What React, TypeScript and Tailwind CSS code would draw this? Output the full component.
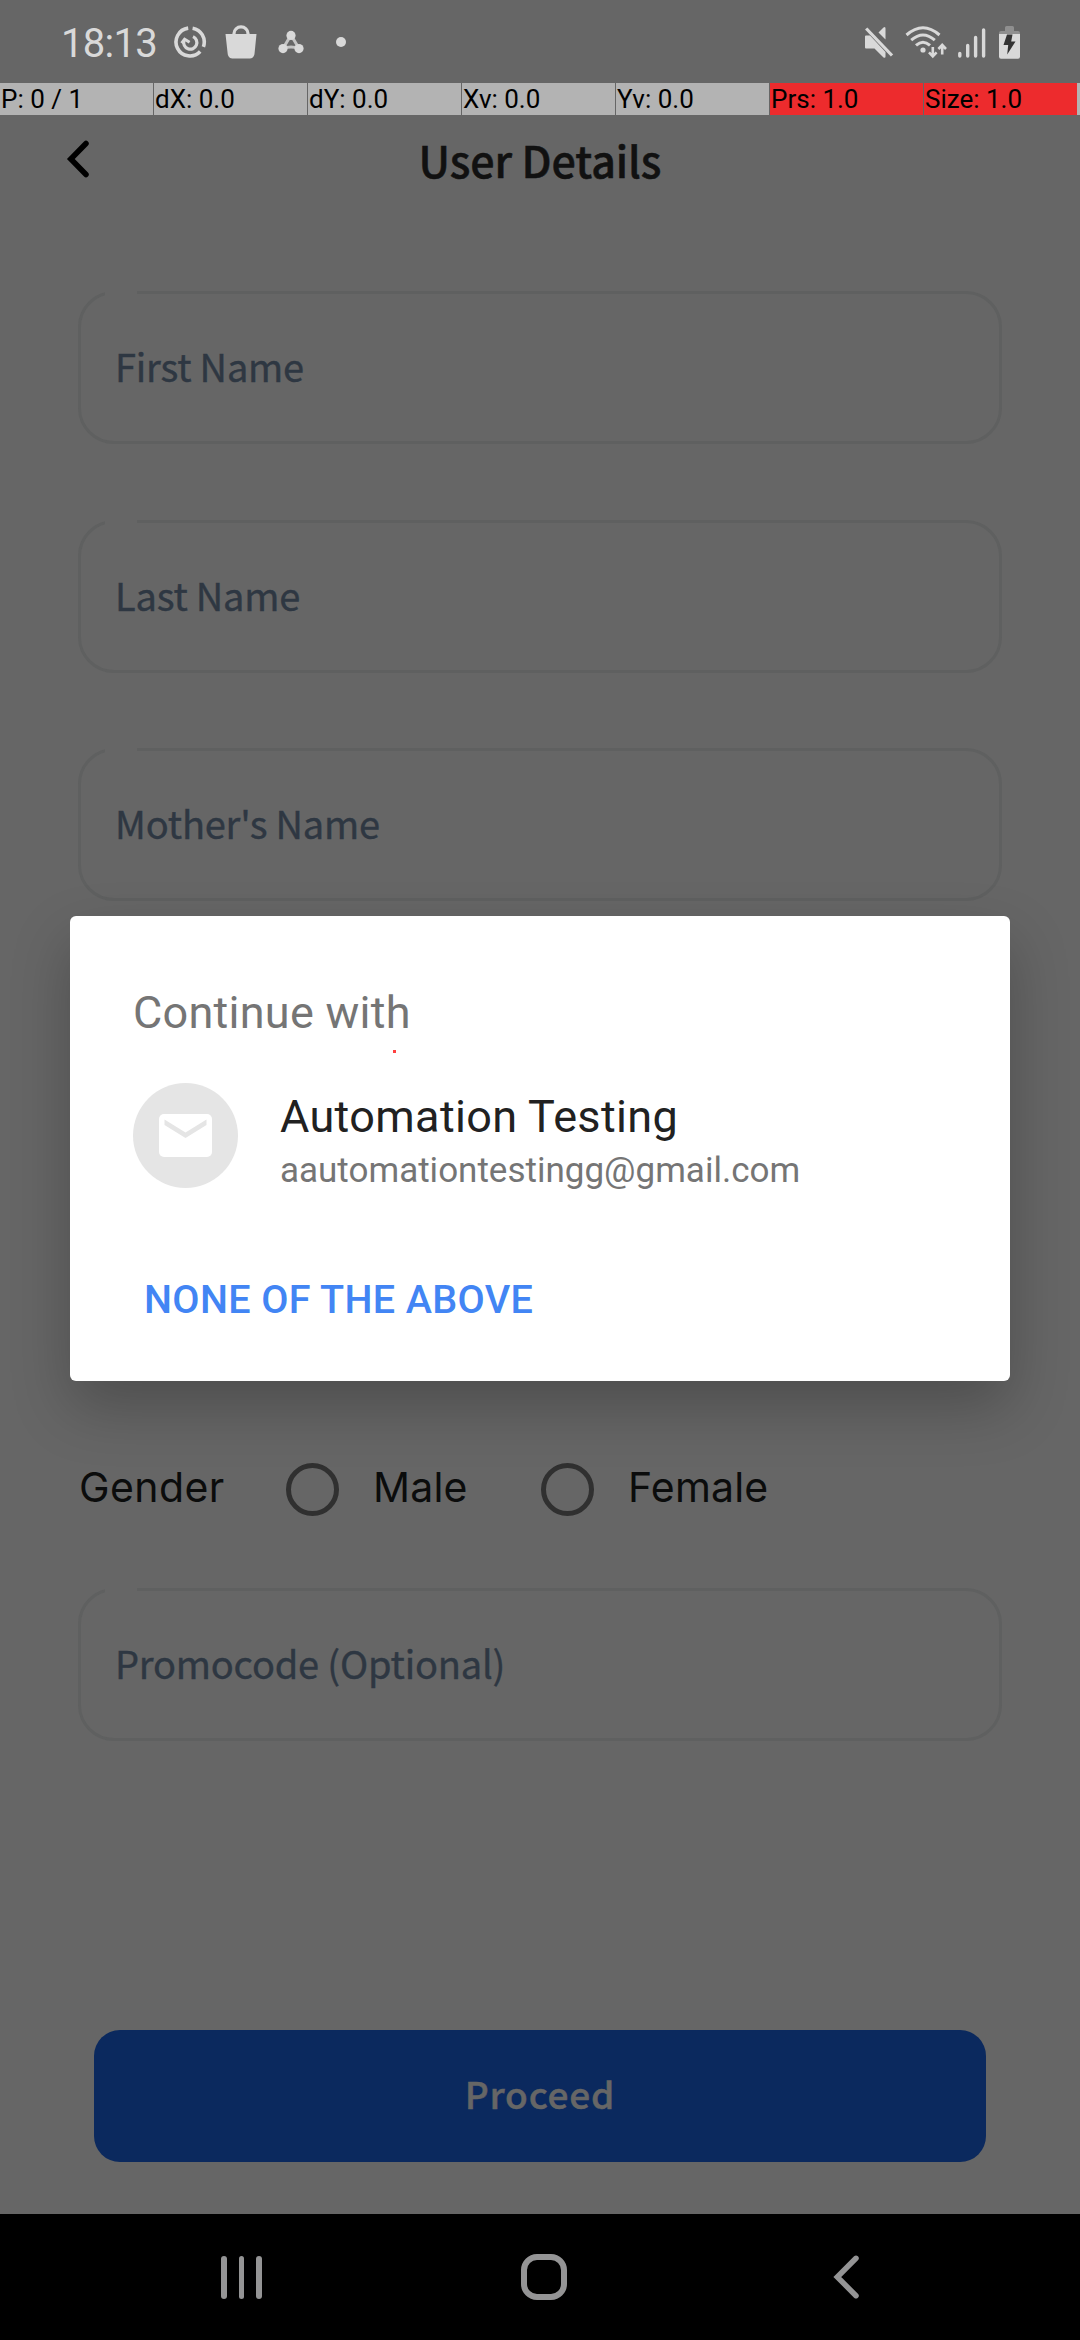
import React from 'react';

const cjk = "font-['Noto_Sans_CJK_SC','Noto_Sans',sans-serif]";

function SyncIcon() {
  return (
    <svg className="ml-[17px] h-[34px] w-[34px] shrink-0" viewBox="0 0 34 34" fill="none" stroke="#d9d9d9">
      <path d="M15.2 3.1A14 14 0 1 0 27.2 26.6" strokeWidth="3.6" />
      <path d="M19.6 3.2A14 14 0 0 1 30.4 21.8" strokeWidth="3.6" />
      <path d="M11 15.5A6.6 6.6 0 1 0 20 11.6" strokeWidth="3.2" />
      <path d="M8.6 18.2L11.6 14.2L16.6 17.2" strokeWidth="3" />
    </svg>
  );
}

function BagIcon() {
  return (
    <svg className="ml-[18px] h-[34px] w-[32px] shrink-0" viewBox="0 0 32 34">
      <path d="M9 10V8.5A7 6.6 0 0 1 23 8.5V10" fill="none" stroke="#d9d9d9" strokeWidth="3.2" />
      <path d="M.5 9H31.5L29.6 28C29.2 32 27.4 33.6 23.8 33.6H8.6C4.8 33.6 3 32 2.6 28Z" fill="#d9d9d9" />
    </svg>
  );
}

function NodesIcon() {
  return (
    <svg className="ml-[21px] h-[24px] w-[26px] shrink-0" viewBox="0 0 26 24">
      <path d="M13 5L5 18.5Q13 15.5 21 18.5Z" fill="none" stroke="#c4c4c4" strokeWidth="3" strokeLinejoin="round" />
      <circle cx="13" cy="5.4" r="4.6" fill="#d9d9d9" />
      <circle cx="5" cy="18.6" r="4.6" fill="#d9d9d9" />
      <circle cx="21" cy="18.6" r="4.6" fill="#d9d9d9" />
    </svg>
  );
}

function MuteIcon() {
  return (
    <svg className="h-[34px] w-[30px] shrink-0" viewBox="0 0 30 34" fill="#d9d9d9">
      <path d="M1 11.5Q1 10.5 2 10.5H6L21.5 27V31.5Q21.5 33.5 19.5 32.5L10.5 23.5H2Q1 23.5 1 22.5Z" />
      <path d="M14.5 7.5L19.5 2.5Q21.5 1 21.5 3.5V14.6Z" />
      <path d="M2.2 3.5L28 30.5" stroke="#d9d9d9" strokeWidth="3.2" />
    </svg>
  );
}

function WifiIcon() {
  return (
    <svg className="ml-[11px] h-[34px] w-[42px] shrink-0" viewBox="0 0 42 34" fill="none" stroke="#d9d9d9" strokeWidth="3">
      <path d="M1.5 10Q18 -4.5 34.5 10" />
      <path d="M6.2 15.2Q18 4.8 29.8 15.2" />
      <path d="M11 20.4Q18 14 25 20.4" />
      <circle cx="18" cy="25" r="2.6" fill="#d9d9d9" stroke="none" />
      <path d="M27.8 22V31M24 27.4L27.8 31.4L31.6 27.4" strokeWidth="2.6" />
      <path d="M37.2 29.5V20.5M33.4 24L37.2 20L41 24" strokeWidth="2.6" />
    </svg>
  );
}

function SignalIcon() {
  return (
    <svg className="ml-[11px] h-[34px] w-[28px] shrink-0" viewBox="0 0 28 34" stroke="#d9d9d9" strokeWidth="3.4" strokeLinecap="round">
      <path d="M1.8 28.5V31M9.7 20.5V31M17.6 12.5V31M25.6 5V31" />
    </svg>
  );
}

function BatteryIcon() {
  return (
    <svg className="ml-[13px] h-[34px] w-[21px] shrink-0" viewBox="0 0 21 34">
      <path d="M6 6V2.5Q6 1 7.5 1H13.5Q15 1 15 2.5V6H19Q21 6 21 8V9H0V8Q0 6 2 6Z" fill="#8f8f8f" />
      <path d="M0 9H21V31.5Q21 33.7 19 33.7H2Q0 33.7 0 31.5Z" fill="#d9d9d9" />
      <path d="M8 9.5H13.5L12.2 16.5H16.5L8.2 29.5L9.2 20H4.5Z" fill="#333" />
    </svg>
  );
}

function StatusBar() {
  return (
    <div className="flex h-[83px] items-center pr-[60px] pl-[61px] font-[Roboto,sans-serif]">
      <span className="w-[95px] pt-[4px] text-[40px] leading-[50px] tracking-[-0.7px] whitespace-nowrap text-[#d9d9d9]">18:13</span>
      <SyncIcon />
      <BagIcon />
      <NodesIcon />
      <span className="ml-[32px] h-[10px] w-[10px] rounded-full bg-[#d9d9d9]" />
      <span className="flex-1" />
      <MuteIcon />
      <WifiIcon />
      <SignalIcon />
      <BatteryIcon />
    </div>
  );
}

const pointer = [
  { t: 'P: 0 / 1', c: 'bg-[#b3b3b3]' },
  { t: 'dX: 0.0', c: 'bg-[#b3b3b3]' },
  { t: 'dY: 0.0', c: 'bg-[#b3b3b3]' },
  { t: 'Xv: 0.0', c: 'bg-[#b3b3b3]' },
  { t: 'Yv: 0.0', c: 'bg-[#b3b3b3]' },
  { t: 'Prs: 1.0', c: 'bg-[#ed2b2d]' },
  { t: 'Size: 1.0', c: 'bg-[#ed2b2d]' },
];

function PointerBar() {
  return (
    <div className="flex h-8 gap-px overflow-hidden font-[Roboto,sans-serif] text-[26px] leading-[32px] text-black">
      {pointer.map((p) => (
        <div key={p.t} className={`w-[153px] shrink-0 pl-px whitespace-nowrap ${p.c}`}>{p.t}</div>
      ))}
      <div className="-ml-px flex-1 bg-[#b3b3b3]" />
    </div>
  );
}

function Field({ label }: { label: string }) {
  return (
    <div className="relative flex h-[153px] items-center rounded-[36px] border-[3px] border-[#5f6060] pb-[3px] pl-[34px]">
      <span className="absolute -top-[3px] left-[24px] h-[5px] w-[32px] bg-[#666]" />
      <span className={`${cjk} text-[38px] leading-[50px] tracking-[-0.2px] text-[#2e3742] [-webkit-text-stroke:0.4px_#2e3742]`}>{label}</span>
    </div>
  );
}

function Radio({ label }: { label: string }) {
  return (
    <div className="flex items-center gap-[33px]">
      <span className="h-[53px] w-[53px] rounded-full border-[5px] border-[#303030]" />
      <span className="-mt-[5px] pl-px tracking-[0.2px]">{label}</span>
    </div>
  );
}

function Dialog() {
  return (
    <div className="absolute top-[916px] left-[70px] flex h-[465px] w-[940px] flex-col rounded-[6px] bg-white px-[63px] font-[Roboto,sans-serif] shadow-[0_26px_60px_rgba(0,0,0,0.24)]">
      <span className="absolute top-[134px] left-[323px] h-[3px] w-[3px] bg-[#ff4040]" />
      <h2 className="mt-[67px] text-[45px] leading-[60px] tracking-[0.25px] text-[#757575]">Continue with</h2>
      <div className="mt-[40px] flex h-[105px] items-start">
        <div className="flex h-[105px] w-[105px] items-center justify-center rounded-full bg-[#e5e5e5]">
          <svg className="h-[43px] w-[53px]" viewBox="0 0 53 43">
            <rect width="53" height="43" rx="5" fill="#fff" />
            <path d="M5.5 5.5V11L26.5 24L47.5 11V5.5L26.5 18.5Z" fill="#e5e5e5" />
          </svg>
        </div>
        <div className="ml-[42px] flex flex-col">
          <span className="mt-[8px] text-[45px] leading-[52px] tracking-[0.35px] text-[#212121]">Automation Testing</span>
          <span className="mt-[6px] text-[35px] leading-[44px] text-[#757575]">aautomationtestingg@gmail.com</span>
        </div>
      </div>
      <button className="mt-[87px] ml-[11px] self-start text-[39.5px] leading-[50px] font-medium tracking-[0.35px] text-[#4285f4]">NONE OF THE ABOVE</button>
    </div>
  );
}

function NavBar() {
  return (
    <div className="flex h-[126px] items-center bg-black">
      <div className="ml-[221px] flex gap-[12px]">
        <span className="h-[43px] w-[5.5px] rounded-full bg-[#949495]" />
        <span className="h-[43px] w-[5.5px] rounded-full bg-[#949495]" />
        <span className="h-[43px] w-[5.5px] rounded-full bg-[#949495]" />
      </div>
      <span className="ml-[259px] h-[46px] w-[46px] rounded-[16px] border-[6px] border-[#949495]" />
      <svg className="ml-[266px] h-[44px] w-[27px]" viewBox="0 0 27 44" fill="none" stroke="#949495" strokeWidth="5.5" strokeLinecap="round">
        <path d="M23 3.3L4.3 22L23 40.7" />
      </svg>
    </div>
  );
}

export default function App() {
  return (
    <div className="relative flex h-[2340px] w-[1080px] flex-col overflow-hidden bg-[#666]">
      <StatusBar />
      <PointerBar />
      <header className="relative flex h-[88px] items-center justify-center">
        <svg className="absolute top-[25px] left-[66px] h-[38px] w-[24px]" viewBox="0 0 24 38" fill="none" stroke="#000" strokeWidth="5.5" strokeLinecap="round">
          <path d="M20 3.5L4.8 19L20 34.5" />
        </svg>
        <h1 className={`${cjk} text-[43px] leading-[60px] font-medium tracking-[-0.1px] text-[#111] [-webkit-text-stroke:0.5px_#111]`}>User Details</h1>
      </header>
      <main className="mt-[88px] flex flex-1 flex-col px-[78px]">
        <div className="flex flex-col gap-[75.5px]">
          <Field label="First Name" />
          <Field label="Last Name" />
          <Field label="Mother's Name" />
        </div>
        <div className="mt-[562px] flex h-[53px] items-center font-[Inter,sans-serif] text-[41px] leading-[50px] text-[#0b0c0c]">
          <span className="-mt-[5px] w-[208px] pl-px tracking-[0.4px]">Gender</span>
          <div className="w-[255px]"><Radio label="Male" /></div>
          <Radio label="Female" />
        </div>
        <div className="mt-[72px]">
          <Field label="Promocode (Optional)" />
        </div>
        <button className={`${cjk} mx-[16px] mt-auto mb-[52px] h-[132px] rounded-[26px] bg-[#0b295e] pb-[4px] text-[37px] font-medium tracking-[0.8px] text-[#666] [-webkit-text-stroke:0.5px_#666]`}>Proceed</button>
      </main>
      <NavBar />
      <Dialog />
    </div>
  );
}
